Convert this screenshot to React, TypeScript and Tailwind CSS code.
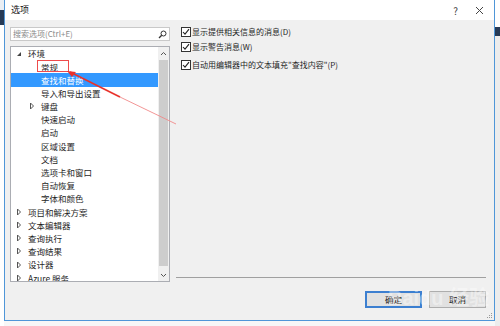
import React from "react";

const FONT = { fontFamily: '"Noto Sans CJK SC", "Noto Sans", sans-serif' };

type Node = { label: string; level: number; arrow?: "open" | "closed"; selected?: boolean };

const tree: Node[] = [
  { label: "环境", level: 0, arrow: "open" },
  { label: "常规", level: 1 },
  { label: "查找和替换", level: 1, selected: true },
  { label: "导入和导出设置", level: 1 },
  { label: "键盘", level: 1, arrow: "closed" },
  { label: "快速启动", level: 1 },
  { label: "启动", level: 1 },
  { label: "区域设置", level: 1 },
  { label: "文档", level: 1 },
  { label: "选项卡和窗口", level: 1 },
  { label: "自动恢复", level: 1 },
  { label: "字体和颜色", level: 1 },
  { label: "项目和解决方案", level: 0, arrow: "closed" },
  { label: "文本编辑器", level: 0, arrow: "closed" },
  { label: "查询执行", level: 0, arrow: "closed" },
  { label: "查询结果", level: 0, arrow: "closed" },
  { label: "设计器", level: 0, arrow: "closed" },
  { label: "Azure 服务", level: 0, arrow: "closed" },
];

const options = [
  "显示提供相关信息的消息(D)",
  "显示警告消息(W)",
  "自动用编辑器中的文本填充\"查找内容\"(P)",
];

function Arrow({ kind }: { kind?: "open" | "closed" }) {
  if (kind === "open")
    return (
      <svg width="6" height="6" viewBox="0 0 6 6">
        <path d="M5 1 L5 5 L1 5 Z" fill="#444" />
      </svg>
    );
  if (kind === "closed")
    return (
      <svg width="6" height="8" viewBox="0 0 6 8">
        <path d="M1.5 1 L4.5 4 L1.5 7 Z" fill="none" stroke="#555" strokeWidth="1" />
      </svg>
    );
  return null;
}

function CheckBox() {
  return (
    <span className="w-[10px] h-[10px] border border-[#333] bg-white flex items-center justify-center shrink-0">
      <svg width="8" height="8" viewBox="0 0 8 8">
        <path d="M1 4 L3 6.2 L7 1.2" fill="none" stroke="#222" strokeWidth="1.1" />
      </svg>
    </span>
  );
}

export default function App() {
  return (
    <div className="w-[500px] h-[326px] bg-[#f7f7f7] flex relative overflow-hidden" style={FONT}>
      {/* left backdrop */}
      <div className="w-[4px] flex flex-col shrink-0">
        <div className="h-[10px] bg-[#e9eef4]" />
        <div className="h-[15px] bg-[#263a56]" />
        <div className="flex-1 bg-white" />
      </div>

      {/* dialog */}
      <div className="w-[491px] h-[321px] border-x border-b border-[#4f96d8] bg-[#f0f0f0] flex flex-col shrink-0">
        {/* title bar */}
        <div className="h-[20px] bg-white flex items-center pl-[6px] pr-[10px] text-[9px] text-[#111]">
          <span>选项</span>
          <span className="ml-auto text-[10px] text-[#444] mr-[17px]">?</span>
          <svg width="9" height="9" viewBox="0 0 9 9">
            <path d="M1 1 L8 8 M8 1 L1 8" stroke="#444" strokeWidth="1" />
          </svg>
        </div>

        <div className="flex-1 flex pl-[5px]">
          {/* left column */}
          <div className="w-[160px] flex flex-col">
            <div className="mt-[7px] h-[14px] bg-white border border-[#c9c9c9] flex items-center pl-[2px] pr-[2px]">
              <span className="text-[8px] text-[#8a8a8a] leading-none">搜索选项(Ctrl+E)</span>
              <svg className="ml-auto" width="9" height="9" viewBox="0 0 9 9">
                <circle cx="5.5" cy="3.5" r="2.5" fill="none" stroke="#333" strokeWidth="1" />
                <path d="M3.7 5.3 L1 8" stroke="#333" strokeWidth="1.3" />
              </svg>
            </div>
            <div className="mt-[5px] h-[236px] bg-white border border-[#abadb3] flex overflow-hidden">
              <div className="flex-1 flex flex-col overflow-hidden">
                {tree.map((n) => (
                  <div
                    key={n.label}
                    className={`h-[13.2px] shrink-0 flex items-center text-[8.5px] leading-none ${
                      n.selected ? "bg-[#3399ff] text-white" : "text-[#1e1e1e]"
                    } ${n.level === 0 ? "pl-[5px]" : "pl-[18px]"}`}
                  >
                    <div className="w-[12px] h-full shrink-0 flex items-center">
                      <Arrow kind={n.arrow} />
                    </div>
                    <span className="whitespace-nowrap">{n.label}</span>
                  </div>
                ))}
              </div>
              {/* scrollbar */}
              <div className="w-[11px] bg-[#f0f0f0] flex flex-col items-center">
                <div className="h-[12px] flex items-center justify-center">
                  <svg width="7" height="5" viewBox="0 0 7 5">
                    <path d="M1 4 L3.5 1.5 L6 4" fill="none" stroke="#555" strokeWidth="1" />
                  </svg>
                </div>
                <div className="w-[9px] h-[206px] bg-[#cdcdcd] mt-[1px]" />
                <div className="mt-auto h-[12px] flex items-center justify-center">
                  <svg width="7" height="5" viewBox="0 0 7 5">
                    <path d="M1 1 L3.5 3.5 L6 1" fill="none" stroke="#555" strokeWidth="1" />
                  </svg>
                </div>
              </div>
            </div>
          </div>

          {/* right column */}
          <div className="flex-1 flex flex-col pl-[11px] pr-[8px]">
            <div className="mt-[7px] flex flex-col gap-[5px]">
              {options.map((o, i) => (
                <div key={o} className={`flex items-center gap-[1px] text-[8px] text-[#1e1e1e] leading-none ${i === 2 ? "mt-[3px]" : ""}`}>
                  <CheckBox />
                  <span className="whitespace-nowrap">{o}</span>
                </div>
              ))}
            </div>
            <div className="mt-auto mb-[12px] flex flex-col">
              <div className="h-px bg-[#a0a0a0] ml-[-5px]" />
              <div className="mt-[13px] flex justify-end gap-[7px]">
                <button className="w-[57px] h-[17px] border-2 border-[#3c7fd0] bg-[#e1e1e1] text-[8.5px] text-[#111] leading-none">
                  确定
                </button>
                <button className="w-[57px] h-[17px] border border-[#adadad] bg-[#e1e1e1] text-[8.5px] text-[#111] leading-none">
                  取消
                </button>
              </div>
            </div>
          </div>
        </div>
        <div className="h-0 relative">
          <svg className="absolute right-[1px] bottom-[1px]" width="8" height="8" viewBox="0 0 8 8">
            <rect x="6" y="2" width="1" height="1" fill="#999" />
            <rect x="4" y="4" width="1" height="1" fill="#999" />
            <rect x="6" y="4" width="1" height="1" fill="#999" />
            <rect x="2" y="6" width="1" height="1" fill="#999" />
            <rect x="4" y="6" width="1" height="1" fill="#999" />
            <rect x="6" y="6" width="1" height="1" fill="#999" />
          </svg>
        </div>
      </div>

      {/* right backdrop */}
      <div className="w-[5px] flex flex-col shrink-0">
        <div className="h-[27px] bg-white" />
        <div className="h-[9px] bg-[#263a56]" />
        <div className="flex-1 bg-[#ececec]" />
      </div>

      {/* red annotation */}
      <svg className="absolute left-0 top-0 pointer-events-none" width="500" height="326" viewBox="0 0 500 326">
        <rect x="37.5" y="60.5" width="31" height="11" fill="none" stroke="#ee4b4b" strokeWidth="1" />
        <path d="M70 72 L120 97" stroke="#e8332c" strokeWidth="1.6" />
        <path d="M120 97 L176 124" stroke="#f08a8a" strokeWidth="0.9" />
        <path d="M67 71 L76 72 L72 77 Z" fill="#e8332c" />
      </svg>

      {/* watermark */}
      <div className="absolute left-[388px] top-[287px] text-white/40 text-[20px] font-bold leading-none pointer-events-none select-none" style={{ fontFamily: '"Liberation Sans", sans-serif' }}>
        Baidu <span style={FONT}>经验</span>
      </div>
    </div>
  );
}
